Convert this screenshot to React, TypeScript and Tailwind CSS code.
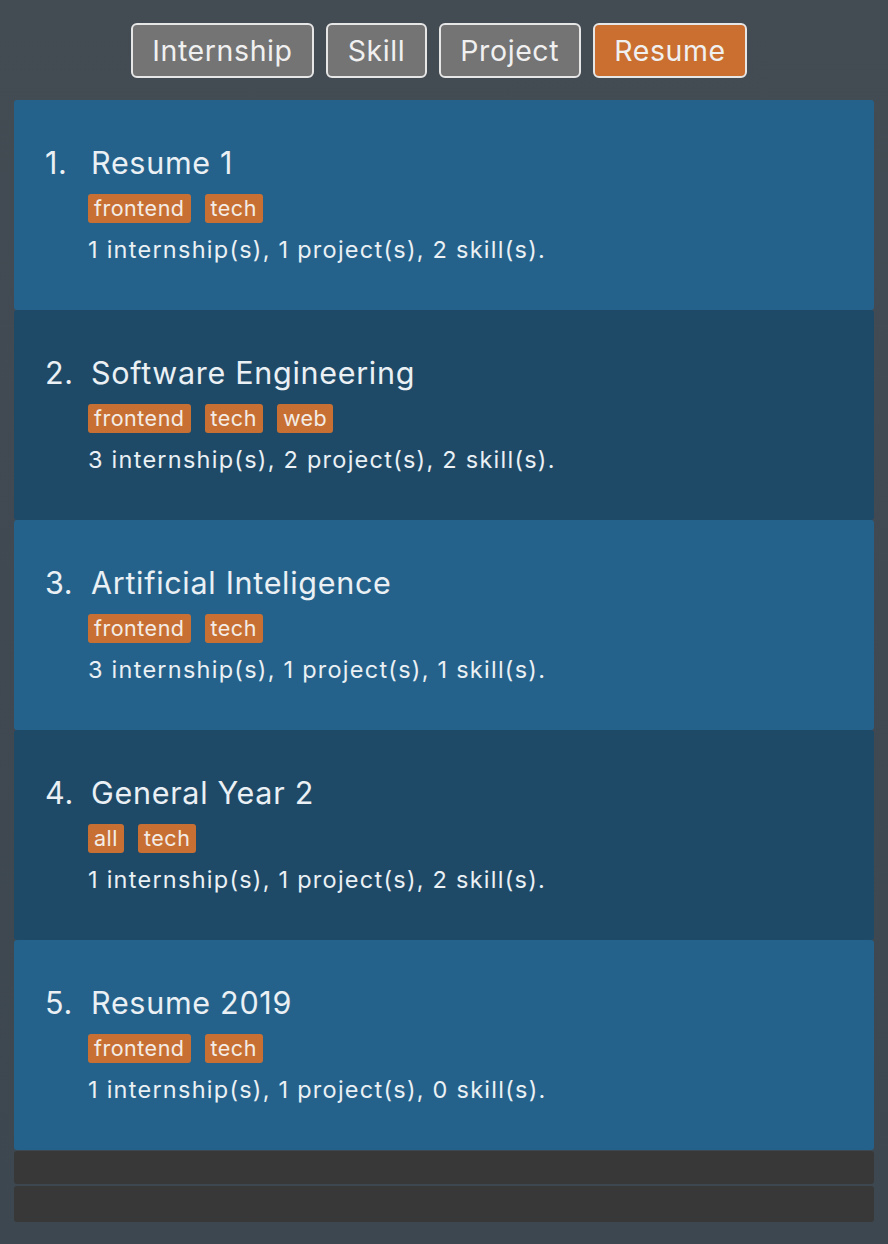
import React from "react";

const tabs = [
  { label: "Internship", active: false },
  { label: "Skill", active: false },
  { label: "Project", active: false },
  { label: "Resume", active: true },
];

const resumes = [
  { n: 1, title: "Resume 1", tags: ["frontend", "tech"], desc: "1 internship(s), 1 project(s), 2 skill(s)." },
  { n: 2, title: "Software Engineering", tags: ["frontend", "tech", "web"], desc: "3 internship(s), 2 project(s), 2 skill(s)." },
  { n: 3, title: "Artificial Inteligence", tags: ["frontend", "tech"], desc: "3 internship(s), 1 project(s), 1 skill(s)." },
  { n: 4, title: "General Year 2", tags: ["all", "tech"], desc: "1 internship(s), 1 project(s), 2 skill(s)." },
  { n: 5, title: "Resume 2019", tags: ["frontend", "tech"], desc: "1 internship(s), 1 project(s), 0 skill(s)." },
];

export default function App() {
  return (
    <div
      className="w-[888px] h-[1244px] overflow-hidden bg-gradient-to-b from-[#434b53] to-[#3d4750] flex flex-col"
      style={{ fontFamily: "Inter, 'Open Sans', sans-serif" }}
    >
      <div className="flex justify-center gap-3 pt-[23px] pr-[10px] h-[100px]">
        {tabs.map((t) => (
          <div
            key={t.label}
            className={`h-[55px] px-[19.5px] pt-[2px] flex items-center rounded-[6px] border-2 border-[#e6e6e6] text-[28.5px] tracking-[0.6px] text-[#f0f0f0] ${
              t.active ? "bg-[#cb6f30]" : "bg-[#747474]"
            }`}
          >
            {t.label}
          </div>
        ))}
      </div>
      <div className="mx-[14px] flex flex-col">
        {resumes.map((r, i) => (
          <div
            key={r.n}
            className={`h-[210px] rounded-[3px] pl-[31px] pt-[43px] flex flex-col ${
              i % 2 === 0 ? "bg-[#25628b]" : "bg-[#1e4a68]"
            }`}
          >
            <div className="flex items-center text-[30.5px] leading-[40px] tracking-[0.7px] text-[#eaf0f4]">
              <span className="w-[46px]">{r.n}.</span>
              <span>{r.title}</span>
            </div>
            <div className="flex gap-[14px] ml-[43px] mt-[11px]">
              {r.tags.map((tg) => (
                <span
                  key={tg}
                  className="h-[29px] px-[6px] flex items-center rounded-[3px] bg-[#c87033] text-[21.5px] tracking-[0.5px] text-[#f3ece6]"
                >
                  {tg}
                </span>
              ))}
            </div>
            <div className="ml-[43px] mt-[12px] text-[23.5px] leading-[30px] tracking-[1.25px] text-[#eaf0f4]">{r.desc}</div>
          </div>
        ))}
        <div className="h-[33px] bg-[#383838] rounded-[3px] mt-[1px]" />
        <div className="h-[36px] bg-[#383838] rounded-[3px] mt-[2px]" />
      </div>
    </div>
  );
}
